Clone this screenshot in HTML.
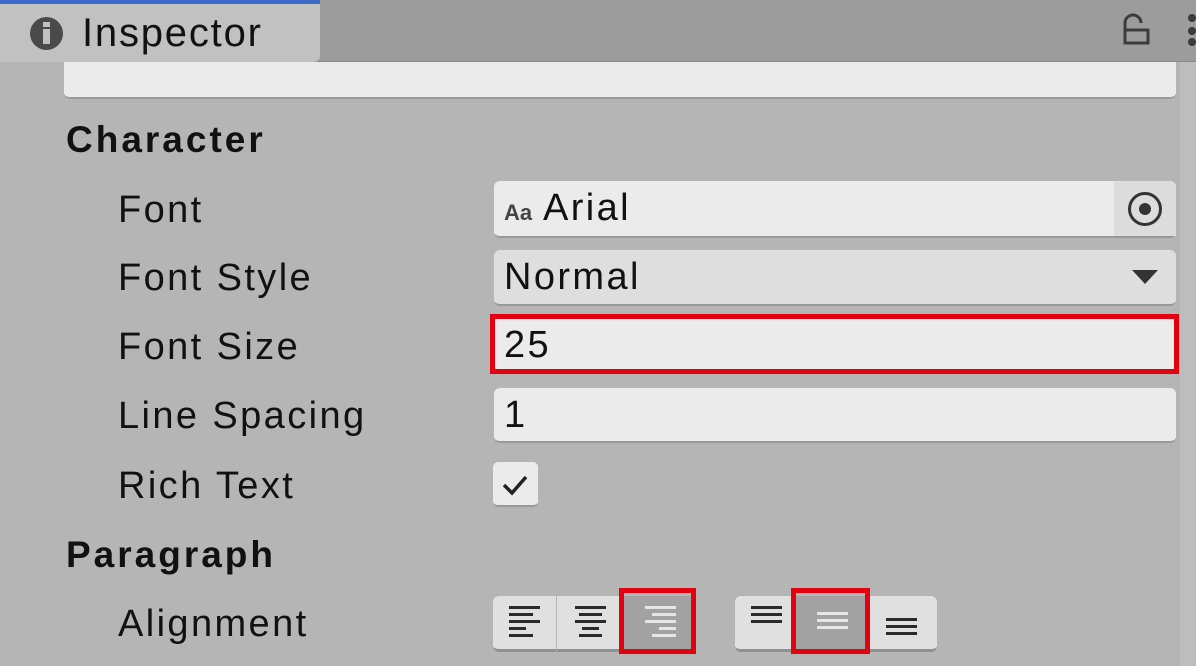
<html><head><style>
body{margin:0;width:1196px;height:666px;background:#b5b5b5;position:relative;overflow:hidden;font-family:"Liberation Sans",sans-serif;color:#111}
div{position:absolute;box-sizing:border-box}
.lbl{left:118px;font-size:38px;line-height:40px;letter-spacing:2.4px}
.h{left:66px;font-size:37px;font-weight:bold;line-height:40px;letter-spacing:3px}
.f{left:494px;width:682px;background:#ebebeb;border-radius:6px;border-bottom:2px solid #999;font-size:38px;letter-spacing:2.4px;line-height:54px;padding-left:10px}
.b{top:596px;height:56px;background:#e0e0e0;border-bottom:3px solid #909090}
.red{border:5px solid #e3000f}
.ln{position:absolute;height:3px;background:#2a2a2a}
</style></head><body>
<div style="left:0;top:0;width:1196px;height:62px;background:#9c9c9c;border-bottom:1px solid #8a8a8a"></div>
<div style="left:0;top:0;width:320px;height:62px;background:#c1c1c1;border-top:4px solid #3a6bc8;border-radius:0 0 6px 0"></div>
<div style="left:30px;top:17px;width:33px;height:33px;border-radius:50%;background:#4a4a4a"></div>
<div style="left:43px;top:22px;width:7px;height:5px;background:#c1c1c1"></div>
<div style="left:43px;top:29px;width:7px;height:15px;background:#c1c1c1"></div>
<div style="left:82px;top:12px;font-size:40px;line-height:42px;letter-spacing:1.8px">Inspector</div>
<svg style="position:absolute;left:1120px;top:10px" width="34" height="36"><path d="M5 20h23v13H5z M5 20V13a8 8 0 0 1 16 0" fill="none" stroke="#3c3c3c" stroke-width="3"/></svg>
<div style="left:1188px;top:14px;width:8px;height:8px;border-radius:50%;background:#3c3c3c"></div>
<div style="left:1188px;top:27px;width:8px;height:8px;border-radius:50%;background:#3c3c3c"></div>
<div style="left:1188px;top:38px;width:8px;height:8px;border-radius:50%;background:#3c3c3c"></div>
<div style="left:1180px;top:62px;width:16px;height:604px;background:#bdbdbd"></div>
<div style="left:64px;top:62px;width:1112px;height:37px;background:#ebebeb;border-radius:0 0 6px 6px;border-bottom:2px solid #9a9a9a"></div>
<div class="h" style="top:120px">Character</div>
<div class="lbl" style="top:190px">Font</div>
<div class="lbl" style="top:258px">Font Style</div>
<div class="lbl" style="top:327px">Font Size</div>
<div class="lbl" style="top:396px">Line Spacing</div>
<div class="lbl" style="top:466px">Rich Text</div>
<div class="h" style="top:535px">Paragraph</div>
<div class="lbl" style="top:604px">Alignment</div>
<div class="f" style="top:181px;height:57px"><span style="font-size:22px;font-weight:bold;color:#444;letter-spacing:0">Aa</span> Arial</div>
<div style="left:1114px;top:181px;width:62px;height:55px;background:#dcdcdc;border-radius:0 6px 0 0"></div>
<div style="left:1128px;top:192px;width:34px;height:34px;border-radius:50%;border:3px solid #333"></div>
<div style="left:1139px;top:203px;width:12px;height:12px;border-radius:50%;background:#333"></div>
<div class="f" style="top:250px;height:56px;background:#dedede">Normal</div>
<svg style="position:absolute;left:1132px;top:270px" width="26" height="16"><path d="M0 0h26L13 14z" fill="#333"/></svg>
<div class="f" style="top:318px;height:52px;border-bottom:none">25</div>
<div class="red" style="left:490px;top:314px;width:689px;height:60px"></div>
<div class="f" style="top:388px;height:55px">1</div>
<div style="left:493px;top:462px;width:45px;height:45px;background:#ebebeb;border-radius:5px;border-bottom:2px solid #999"></div>
<svg style="position:absolute;left:500px;top:472px" width="30" height="26"><path d="M4 13l8 8L26 5" fill="none" stroke="#222" stroke-width="3.5"/></svg>
<div class="b" style="left:493px;width:63px;border-radius:6px 0 0 6px">
<span class="ln" style="left:16px;top:10px;width:31px"></span><span class="ln" style="left:16px;top:17px;width:24px"></span><span class="ln" style="left:16px;top:24px;width:31px"></span><span class="ln" style="left:16px;top:31px;width:17px"></span><span class="ln" style="left:16px;top:38px;width:24px"></span></div>
<div class="b" style="left:557px;width:64px">
<span class="ln" style="left:18px;top:10px;width:31px"></span><span class="ln" style="left:22px;top:17px;width:23px"></span><span class="ln" style="left:18px;top:24px;width:31px"></span><span class="ln" style="left:25px;top:31px;width:17px"></span><span class="ln" style="left:22px;top:38px;width:23px"></span></div>
<div class="b" style="left:621px;width:74px;background:#a2a2a2">
<span class="ln" style="background:#e6e6e6;left:24px;top:10px;width:31px"></span><span class="ln" style="background:#e6e6e6;left:31px;top:17px;width:24px"></span><span class="ln" style="background:#e6e6e6;left:24px;top:24px;width:31px"></span><span class="ln" style="background:#e6e6e6;left:38px;top:31px;width:17px"></span><span class="ln" style="background:#e6e6e6;left:31px;top:38px;width:24px"></span></div>
<div class="red" style="left:619px;top:588px;width:77px;height:66px"></div>
<div class="b" style="left:735px;width:60px;border-radius:6px 0 0 6px">
<span class="ln" style="left:16px;top:10px;width:31px"></span><span class="ln" style="left:16px;top:17px;width:31px"></span><span class="ln" style="left:16px;top:24px;width:31px"></span></div>
<div class="b" style="left:795px;width:74px;background:#a2a2a2">
<span class="ln" style="background:#e6e6e6;left:22px;top:16px;width:31px"></span><span class="ln" style="background:#e6e6e6;left:22px;top:23px;width:31px"></span><span class="ln" style="background:#e6e6e6;left:22px;top:30px;width:31px"></span></div>
<div class="b" style="left:869px;width:68px;border-radius:0 6px 6px 0">
<span class="ln" style="left:17px;top:22px;width:31px"></span><span class="ln" style="left:17px;top:29px;width:31px"></span><span class="ln" style="left:17px;top:36px;width:31px"></span></div>
<div class="red" style="left:791px;top:588px;width:79px;height:66px"></div>
</body></html>
